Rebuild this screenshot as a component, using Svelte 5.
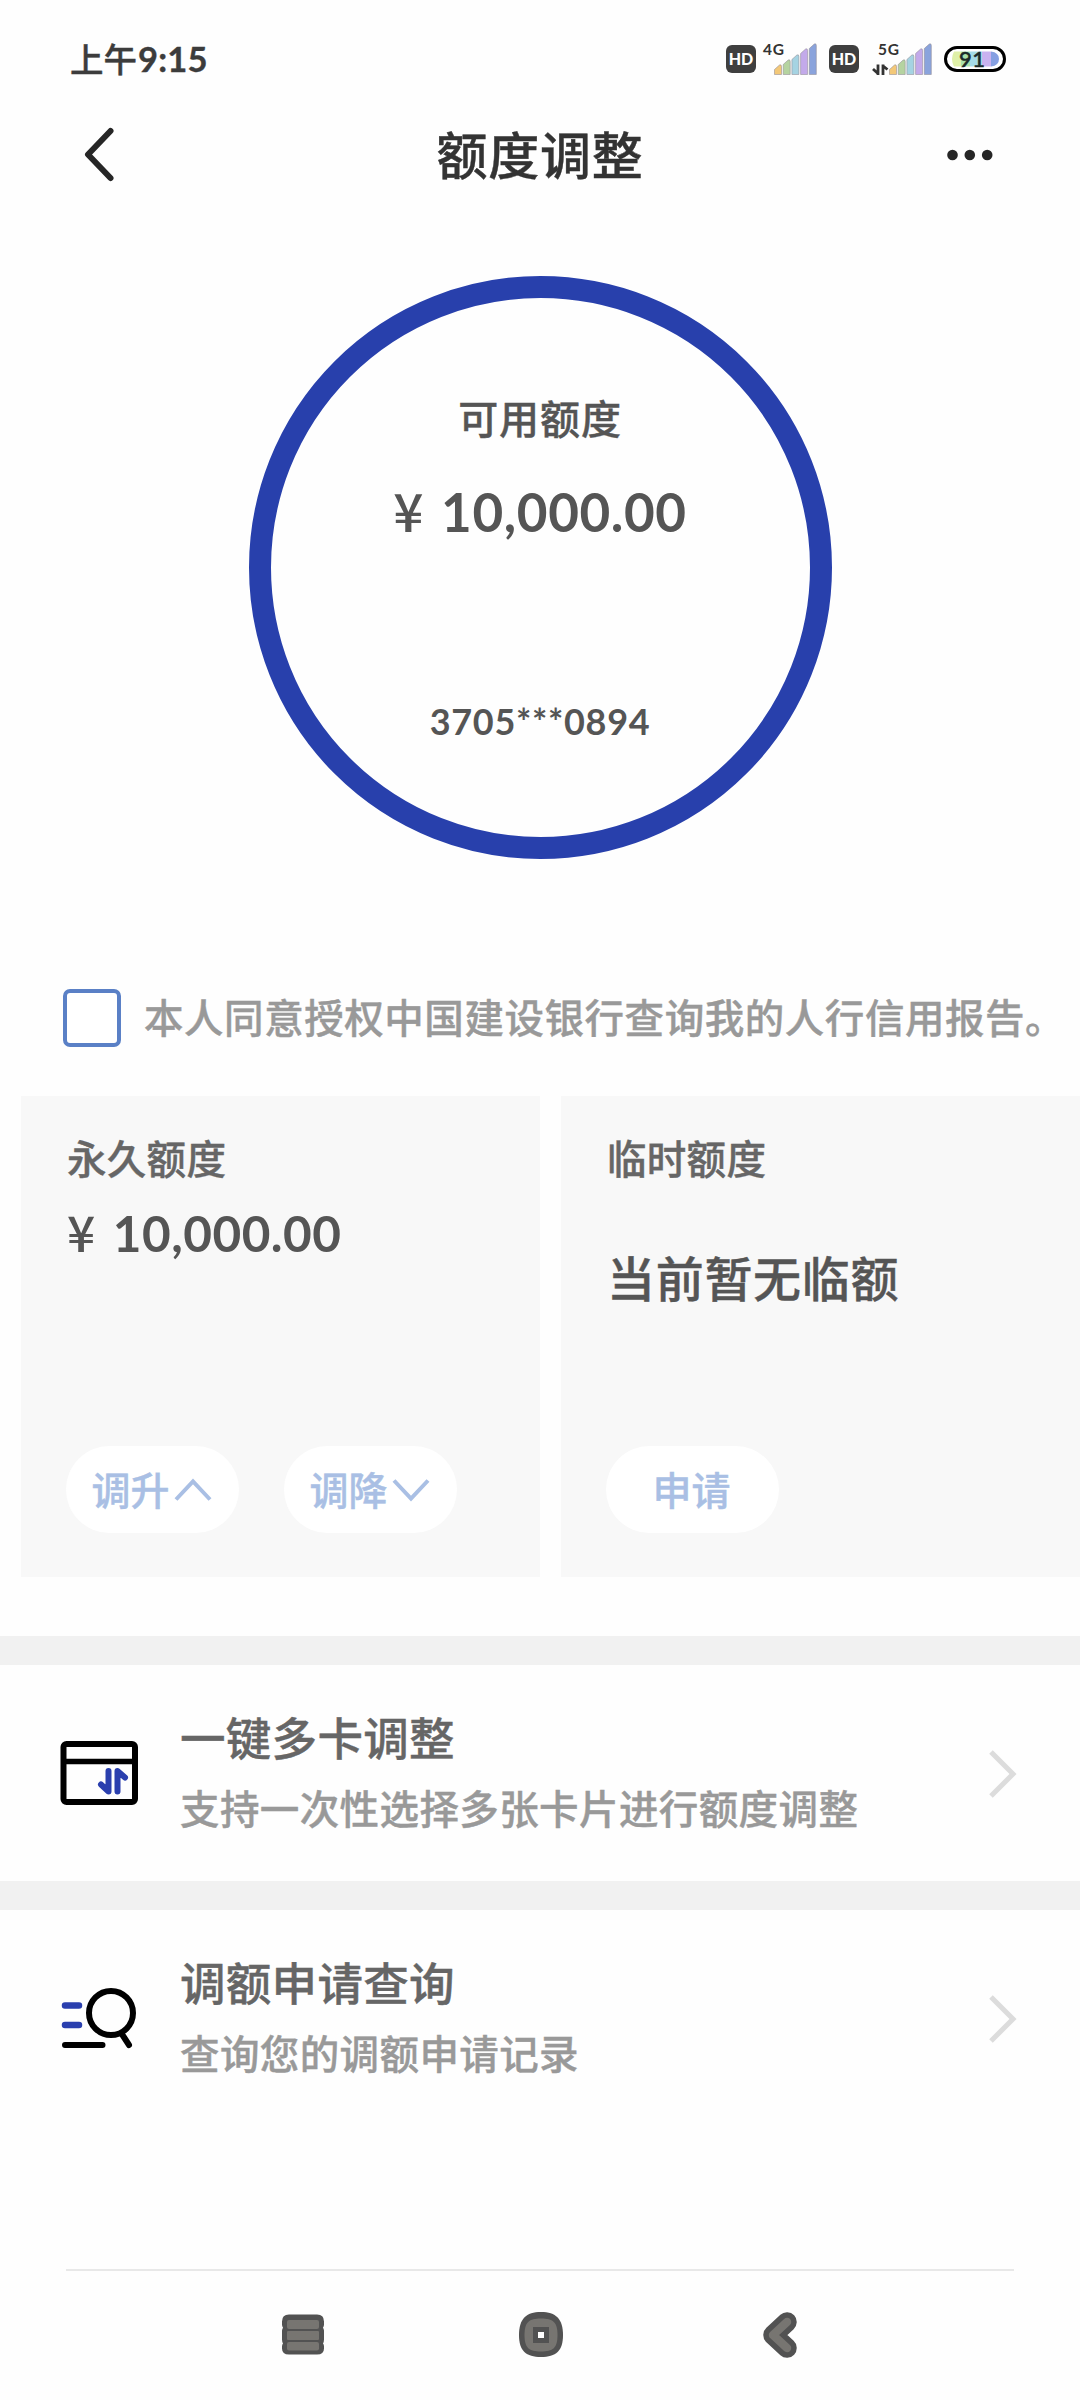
<script lang="ts">
  type Service = { id: "cards" | "query"; title: string; hint: string };

  const available = "10,000.00";
  const permanent = "10,000.00";
  const cardNo = "3705***0894";

  const services: Service[] = [
    { id: "cards", title: "一键多卡调整", hint: "支持一次性选择多张卡片进行额度调整" },
    { id: "query", title: "调额申请查询", hint: "查询您的调额申请记录" },
  ];

  const bars = [
    { h: 10, color: "#f3c878" },
    { h: 15, color: "#b5d3a0" },
    { h: 20, color: "#a5d3e2" },
    { h: 26, color: "#c3aaea" },
    { h: 31, color: "#8aa3dc" },
  ];

  let agreed = $state(false);
</script>

{#snippet signal(label: string, data: boolean)}
  <svg class="signal" class:data width="60" height="44" viewBox="0 -5 60 44">
    {#each bars as bar, i}
      <path
        d="M{16.5 + i * 8.7} 32.5v{-bar.h + 5}l5 -4.5q2 -1 2 1.5v{bar.h - 2}z"
        fill={bar.color} stroke="#8f8a94" stroke-opacity=".55" stroke-width="1" stroke-linejoin="round"
      />
    {/each}
    <text x="5" y="13" font-size="15.5" textLength="21">{label}</text>
    {#if data}
      <path d="M5 33V22.5M5.5 32L0 27M10 33V22.5M9.5 23.5L14.5 27.5" fill="none" stroke="#333" stroke-width="2.8" />
    {/if}
  </svg>
{/snippet}

{#snippet hd()}
  <span class="hd">HD</span>
{/snippet}

<main>
  <div class="status">
    <span class="time">上午<b>9:15</b></span>
    <div class="status-icons">
      {@render hd()}
      {@render signal("4G", false)}
      {@render hd()}
      {@render signal("5G", true)}
      <svg class="battery" width="62" height="26" viewBox="0 0 62 26">
        <rect x="1.5" y="1.5" width="59" height="23" rx="11.5" fill="#fff" stroke="#000" stroke-width="3" />
        <path d="M10 5.500h7v15h-7q-4-7.500 0-15z" fill="#dff0a8" />
        <path d="M17 5.500h9v15h-9z" fill="#a9e2ac" />
        <path d="M26 5.500h12v15H26z" fill="#a5dbe8" />
        <path d="M38 5.500h9v15h-9z" fill="#c9b2f0" />
        <path d="M47 5.500q8 1 8 7.500t-8 7.500z" fill="#86a0e2" />
        <text class="level" x="15" y="20.5" font-size="22" textLength="26">91</text>
      </svg>
    </div>
  </div>

  <header>
    <button class="nav-btn" aria-label="返回">
      <svg width="36" height="60" viewBox="0 0 36 60" fill="none" stroke="#262626" stroke-width="6" stroke-linecap="round" stroke-linejoin="round">
        <path d="M28.5 6L6 29.5L28.5 53" />
      </svg>
    </button>
    <h1>额度调整</h1>
    <button class="nav-btn" aria-label="更多">
      <svg width="46" height="12" viewBox="0 0 46 12" fill="#262626">
        <circle cx="5.5" cy="6" r="5.3" /><circle cx="22.8" cy="6" r="5.3" /><circle cx="40.2" cy="6" r="5.3" />
      </svg>
    </button>
  </header>

  <section class="ring">
    <p class="ring-label">可用额度</p>
    <p class="ring-amount"><span class="yen">¥</span>{available}</p>
    <p class="ring-card">{cardNo}</p>
  </section>

  <label class="agree">
    <input type="checkbox" bind:checked={agreed} />
    <span>本人同意授权中国建设银行查询我的人行信用报告。</span>
  </label>

  <section class="limits">
    <div class="limit">
      <h2>永久额度</h2>
      <p class="amount"><span class="yen">¥</span>{permanent}</p>
      <div class="actions">
        <button disabled={!agreed}>
          调升
          <svg width="38" height="24" viewBox="0 0 38 24"><path d="M2 21.5L19 3.5L36 21.5" /></svg>
        </button>
        <button disabled={!agreed}>
          调降
          <svg width="38" height="24" viewBox="0 0 38 24"><path d="M2 2.5L19 20.5L36 2.5" /></svg>
        </button>
      </div>
    </div>
    <div class="limit">
      <h2>临时额度</h2>
      <p class="none">当前暂无临额</p>
      <div class="actions">
        <button disabled={!agreed}>申请</button>
      </div>
    </div>
  </section>

  {#each services as item (item.id)}
    <a class="service" href="#{item.id}">
      <svg class="service-icon" width="80" height="70" viewBox="0 0 80 70" fill="none" stroke="#000" stroke-width="6" stroke-linecap="round" stroke-linejoin="round">
        {#if item.id === "cards"}
          <rect x="3.5" y="6" width="71.5" height="58" rx="3" />
          <path d="M4 23.5H75" stroke-width="5.5" />
          <path d="M48.5 33V53.5L41 46.5M57.5 53.5V33L65 39.5" stroke="#2a3fae" />
        {:else}
          <path d="M5 22.5H19M5 42H19" stroke="#2a3fae" stroke-width="6.5" />
          <path d="M5 62H42.5M62.5 52L69 62" />
          <circle cx="51" cy="30" r="22" />
        {/if}
      </svg>
      <div class="service-text">
        <h3>{item.title}</h3>
        <p>{item.hint}</p>
      </div>
      <svg class="arrow" width="30" height="52" viewBox="0 0 30 52"><path d="M4 4L26 26L4 48" /></svg>
    </a>
  {/each}

  <!-- system navigation -->
  <nav>
    <svg width="44" height="46" viewBox="0 0 44 46">
      <path d="M8 2.500h28q7 0 7 7v3q0 2-1 3q1 2 1 4v8q0 2-1 4q1 1 1 3v2q0 6-7 6H8q-7 0-7-6v-2q0-2 1-3q-1-2-1-4v-8q0-2 1-4q-1-1-1-3v-3q0-7 7-7z" fill="#525252" />
      <rect x="6" y="8" width="32" height="9" rx="2" fill="#777571" />
      <rect x="6" y="19" width="32" height="9" rx="1" fill="#777571" />
      <rect x="6" y="30" width="32" height="8.5" rx="2" fill="#777571" />
    </svg>
    <svg width="46" height="46" viewBox="0 0 46 46">
      <path d="M23 0C38 0 45 7 45 23S38 45 23 45S1 39 1 23S8 0 23 0z" fill="#525252" />
      <path d="M23 6.500C35 6.500 39.500 10 39.500 23S35 39.500 23 39.500S6.500 36 6.500 23S11 6.500 23 6.500z" fill="#777571" />
      <rect x="15" y="15" width="16" height="16" fill="#525252" />
      <rect x="20" y="20" width="6" height="6" fill="#fff" />
    </svg>
    <svg width="36" height="46" viewBox="0 0 36 46" fill="none" stroke-linecap="round" stroke-linejoin="round">
      <path d="M25 10L11 23L25 36" stroke="#525252" stroke-width="19.5" />
      <path d="M25 10L11 23L25 36" stroke="#777571" stroke-width="8.5" />
    </svg>
  </nav>
</main>

<style>
  :global(body) { background: #fefefe; }

  main {
    width: 1080px; height: 2400px; overflow: hidden;
    display: flex; flex-direction: column;
    font-family: "Noto Sans CJK SC", sans-serif; font-weight: 500; color: #555;
    -webkit-text-stroke: .4px currentColor;
  }
  h1, h2, h3, p { margin: 0; font-weight: 500; }
  button { border: none; background: none; padding: 0; font: inherit; color: inherit; }
  svg { flex: none; display: block; -webkit-text-stroke: 0; }

  /* ── Status bar ── */
  .status {
    height: 118px; box-sizing: border-box; padding: 0 74px 0 70px; flex: none;
    display: flex; align-items: center; justify-content: space-between;
  }
  .time { font-size: 33.5px; line-height: 48px; color: #3c3c3c; margin-bottom: 1px; }
  .time b { font-family: Lato, sans-serif; font-size: 34.5px; font-weight: 700; letter-spacing: .2px; margin-left: 1px; }
  .status-icons { display: flex; align-items: center; }
  .status-icons text { font-family: Lato, sans-serif; fill: #333; font-weight: 700; }
  .status-icons .level { fill: #1c2a2a; font-weight: 500; stroke: #1c2a2a; stroke-width: .5px; }
  .battery { overflow: visible; }
  .hd {
    width: 30px; height: 28px; border-radius: 6px; background: #3f3f3f; color: #fff;
    font: 900 16px/28px Lato, sans-serif; text-align: center; -webkit-text-stroke: 0;
  }
  .signal { margin: 0 11px 0 2px; overflow: visible; }
  .signal.data { margin-left: 14px; }

  /* ── Title bar ── */
  header {
    height: 74px; padding: 0 87px 0 82px; flex: none; box-sizing: border-box;
    display: grid; grid-template-columns: 1fr auto 1fr; align-items: center;
  }
  h1 { font-size: 51px; line-height: 69px; color: #333; letter-spacing: .8px; margin: 0 0 4px 5px; }
  .nav-btn { display: flex; }
  .nav-btn:last-child { justify-self: end; }

  /* ── Available limit ── */
  .ring {
    width: 583px; height: 583px; box-sizing: border-box; margin: 84px auto 0;
    border: 22px solid #2840ac; border-radius: 50%; flex: none;
    display: flex; flex-direction: column; align-items: center;
  }
  .ring-label { margin-top: 91px; font-size: 40px; line-height: 56px; letter-spacing: .9px; }
  .ring-amount { margin-top: 32px; font: 700 53px/64px Lato, sans-serif; letter-spacing: .6px; -webkit-text-stroke: 0; }
  .ring-card { margin-top: 153px; font: 700 36px/48px Lato, sans-serif; letter-spacing: .7px; -webkit-text-stroke: 0; }
  .yen { font-family: "Noto Sans CJK SC", sans-serif; font-weight: 500; margin-right: 17px; }

  /* ── Consent ── */
  .agree { margin-top: 130px; padding-left: 63px; display: flex; align-items: center; height: 58px; flex: none; }
  .agree input {
    appearance: none; width: 58px; height: 58px; margin: 0 23px 0 0; flex: none;
    border: 4px solid #5a80c6; border-radius: 7px; background: #fff;
  }
  .agree input:checked { background: #5179c1; }
  .agree span { margin-bottom: 4px; font-size: 39.5px; line-height: 54px; letter-spacing: .55px; color: #999; white-space: nowrap; }

  /* ── Limit cards ── */
  .limits { margin-top: 49px; padding-left: 21px; display: flex; gap: 21px; height: 481px; flex: none; }
  .limit {
    flex: 1; box-sizing: border-box; padding: 34px 0 44px 46px; background: #f8f8f8;
    display: flex; flex-direction: column;
  }
  h2 { font-size: 39.5px; line-height: 54px; color: #666; letter-spacing: .3px; }
  .amount { margin-top: 17px; font: 700 49.5px/60px Lato, sans-serif; letter-spacing: .5px; -webkit-text-stroke: 0; }
  .none { margin-top: 57px; font-size: 48px; line-height: 70px; letter-spacing: .7px; }
  .actions { margin: auto 0 0 -1px; display: flex; gap: 45px; }
  .actions button {
    width: 173px; height: 87px; border-radius: 43.5px; background: #fff; color: #a9bfe4;
    display: flex; align-items: center; justify-content: center; gap: 5px;
    font-size: 39px; line-height: 54px; box-sizing: border-box; padding: 0 2px 3px 0;
  }
  .actions svg { fill: none; stroke: currentColor; stroke-width: 4; margin: 3px 0 0 -1px; }

  /* ── Services ── */
  .service {
    height: 216px; border-top: 29px solid #f1f1f1; flex: none;
    display: flex; align-items: center; padding: 0 63px 0 60px; text-decoration: none;
  }
  .limits + .service { margin-top: 59px; }
  .service-icon { margin-right: 40px; }
  .service-text { flex: 1; margin-bottom: 10px; }
  h3 { font-size: 45.5px; line-height: 66px; color: #666; letter-spacing: .3px; }
  .service-text p { margin-top: 11px; font-size: 39.5px; line-height: 54px; letter-spacing: .4px; color: #999; }
  .arrow { fill: none; stroke: #dcdcdc; stroke-width: 5; margin-top: 1px; }

  nav {
    margin: auto 66px 0; height: 129px; border-top: 2px solid #e8e8e8; padding-left: 215px;
    display: flex; align-items: center; gap: 193px;
  }
  nav svg { margin-bottom: 2px; }
  nav svg:last-child { margin-left: 5px; }
</style>
